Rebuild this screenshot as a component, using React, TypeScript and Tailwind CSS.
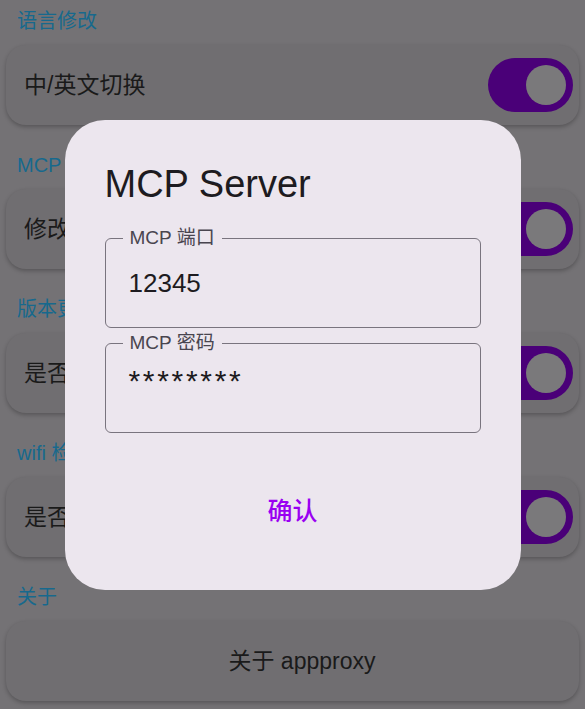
import React from "react";

const font = { fontFamily: '"Liberation Sans", "Noto Sans CJK SC", sans-serif' };

type Row = { title: string; label: string; toggle?: boolean; center?: boolean };

const rows: Row[] = [
  { title: "语言修改", label: "中/英文切换", toggle: true },
  { title: "MCP 服务", label: "修改 MCP 配置", toggle: true },
  { title: "版本更新", label: "是否自动检查更新", toggle: true },
  { title: "wifi 检测", label: "是否开启 wifi 检测", toggle: true },
  { title: "关于", label: "关于 appproxy", center: true },
];

function Toggle() {
  return (
    <div className="flex h-[54px] w-[85px] items-center justify-end rounded-full bg-[#4a0078] pr-[7px]">
      <div className="h-[40px] w-[40px] rounded-full bg-[#7a797b]" />
    </div>
  );
}

function Field({ label, value, secret }: { label: string; value: string; secret?: boolean }) {
  return (
    <div className="relative flex h-[90px] items-center rounded-[6px] border-[1.5px] border-[#79747e] pl-[23px]">
      <span className="absolute left-[17px] top-[-13px] bg-[#ece6ee] px-[7px] text-[19px] leading-[24px] text-[#49454f]">
        {label}
      </span>
      {secret ? (
        <span className="mb-[14px] text-[30px] leading-[30px] tracking-[2.7px] text-[#1d1b20]">{value}</span>
      ) : (
        <span className="text-[26px] leading-[30px] text-[#1d1b20]">{value}</span>
      )}
    </div>
  );
}

export default function App() {
  return (
    <div className="relative h-[709px] w-full overflow-hidden bg-[#747275] px-[6px] pt-[7px]" style={font}>
      {rows.map((row) => (
        <div key={row.title} className="mb-[26px]">
          <div className="pl-[11px] text-[20px] leading-[28px] text-[#17698d]">{row.title}</div>
          <div
            className={
              row.center
                ? "mt-[10px] flex h-[80px] items-center justify-center rounded-[20px] bg-[#706e71] pl-[19px] shadow-[0_2px_4px_rgba(0,0,0,0.25)]"
                : "mt-[10px] flex h-[80px] items-center justify-between rounded-[20px] bg-[#706e71] pl-[18px] pr-[6px] shadow-[0_2px_4px_rgba(0,0,0,0.25)]"
            }
          >
            <span className="text-[23px] leading-[30px] text-[#1a1a1a]">{row.label}</span>
            {row.toggle && <Toggle />}
          </div>
        </div>
      ))}

      <div className="absolute inset-0 flex items-center justify-center">
        <div className="w-[456px] rounded-[40px] bg-[#ece6ee] px-[40px] pt-[42px]">
          <div className="text-[38px] leading-[44px] text-[#1d1b20]">MCP Server</div>
          <div className="mt-[32px] flex flex-col gap-[15px]">
            <Field label="MCP 端口" value="12345" />
            <Field label="MCP 密码" value="********" secret />
          </div>
          <div className="flex h-[157px] items-center justify-center">
            <span className="text-[25px] font-medium leading-[30px] text-[#9a00f2]">确认</span>
          </div>
        </div>
      </div>
    </div>
  );
}
